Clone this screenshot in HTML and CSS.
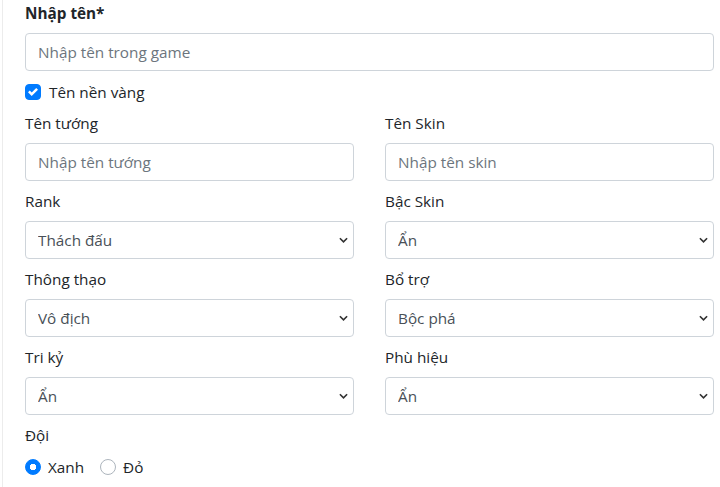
FILE: index.html
```html
<!DOCTYPE html>
<html lang="vi">
<head>
<meta charset="utf-8">
<title>Form</title>
<link rel="stylesheet" href="styles.css">
</head>
<body>
<div class="page">
  <form class="form">
    <div class="group">
      <label class="label bold" for="name">Nhập tên*</label>
      <input class="control" id="name" type="text" placeholder="Nhập tên trong game">
    </div>
    <div class="check-row">
      <label class="check">
        <span class="box checked"><svg viewBox="0 0 8 8" width="10" height="10"><path fill="#fff" d="M6.564.75l-3.59 3.612-1.538-1.55L0 4.26l2.974 2.99L8 2.193z"/></svg></span>
        <span>Tên nền vàng</span>
      </label>
    </div>
    <div class="grid">
      <div class="group">
        <label class="label" for="hero">Tên tướng</label>
        <input class="control" id="hero" type="text" placeholder="Nhập tên tướng">
      </div>
      <div class="group">
        <label class="label" for="skin">Tên Skin</label>
        <input class="control" id="skin" type="text" placeholder="Nhập tên skin">
      </div>
      <div class="group">
        <label class="label" for="rank">Rank</label>
        <select class="control select" id="rank"><option>Thách đấu</option></select>
      </div>
      <div class="group">
        <label class="label" for="tier">Bậc Skin</label>
        <select class="control select" id="tier"><option>Ẩn</option></select>
      </div>
      <div class="group">
        <label class="label" for="mastery">Thông thạo</label>
        <select class="control select" id="mastery"><option>Vô địch</option></select>
      </div>
      <div class="group">
        <label class="label" for="spell">Bổ trợ</label>
        <select class="control select" id="spell"><option>Bộc phá</option></select>
      </div>
      <div class="group">
        <label class="label" for="soul">Tri kỷ</label>
        <select class="control select" id="soul"><option>Ẩn</option></select>
      </div>
      <div class="group">
        <label class="label" for="badge">Phù hiệu</label>
        <select class="control select" id="badge"><option>Ẩn</option></select>
      </div>
    </div>
    <div class="group team">
      <div class="label">Đội</div>
      <div class="radios">
        <label class="check radio-item">
          <span class="radio checked"></span>
          <span>Xanh</span>
        </label>
        <label class="check radio-item">
          <span class="radio"></span>
          <span>Đỏ</span>
        </label>
      </div>
    </div>
  </form>
</div>
</body>
</html>
```
FILE: styles.css
```css
* { box-sizing: border-box; }
html, body { margin: 0; padding: 0; background: #fff; }
body {
  font-family: "Open Sans", "Noto Sans", "Liberation Sans", sans-serif;
  font-size: 15.3px;
  line-height: 24px;
  color: #212529;
}
.page {
  width: 718px;
  height: 487px;
  overflow: hidden;
  border-left: 1px solid #ececec;
  margin-left: 2px;
}
.form {
  padding: 1px 6px 0 22px;
}
.group { display: flex; flex-direction: column; margin-bottom: 8px; }
.label { display: block; margin-bottom: 8px; line-height: 24px; }
.bold { font-weight: 700; }
.control {
  display: block;
  width: 100%;
  height: 38px;
  padding: 6px 12px;
  font-family: inherit;
  font-size: 15.3px;
  line-height: 24px;
  color: #495057;
  background: #fff;
  border: 1px solid #ced4da;
  border-radius: 4px;
  outline: none;
}
.control::placeholder { color: #6c757d; opacity: 1; }
.select {
  appearance: none;
  -webkit-appearance: none;
  padding-right: 30px;
  background-image: url("data:image/svg+xml,%3Csvg xmlns='http://www.w3.org/2000/svg' width='10' height='6' viewBox='0 0 10 6'%3E%3Cpath d='M1 1l4 4 4-4' fill='none' stroke='%23333' stroke-width='1.8'/%3E%3C/svg%3E");
  background-repeat: no-repeat;
  background-position: right 5px center;
  background-size: 9px 6px;
}
.check-row { margin-bottom: 7px; }
.check {
  display: inline-flex;
  align-items: center;
  line-height: 24px;
  cursor: pointer;
}
.box {
  width: 16px;
  height: 16px;
  border-radius: 4px;
  margin-right: 8px;
  display: inline-flex;
  align-items: center;
  justify-content: center;
  border: 1px solid #adb5bd;
}
.box.checked { background: #007bff; border-color: #007bff; }
.grid {
  display: grid;
  grid-template-columns: 1fr 1fr;
  column-gap: 31px;
}
.radios { display: flex; }
.radio-item { margin-right: 16px; }
.radio {
  width: 16px;
  height: 16px;
  border-radius: 50%;
  border: 1px solid #adb5bd;
  background: #fff;
  margin-right: 7px;
}
.radio.checked {
  border-color: #007bff;
  background: radial-gradient(circle, #fff 0 3px, #007bff 3.5px);
}
```
